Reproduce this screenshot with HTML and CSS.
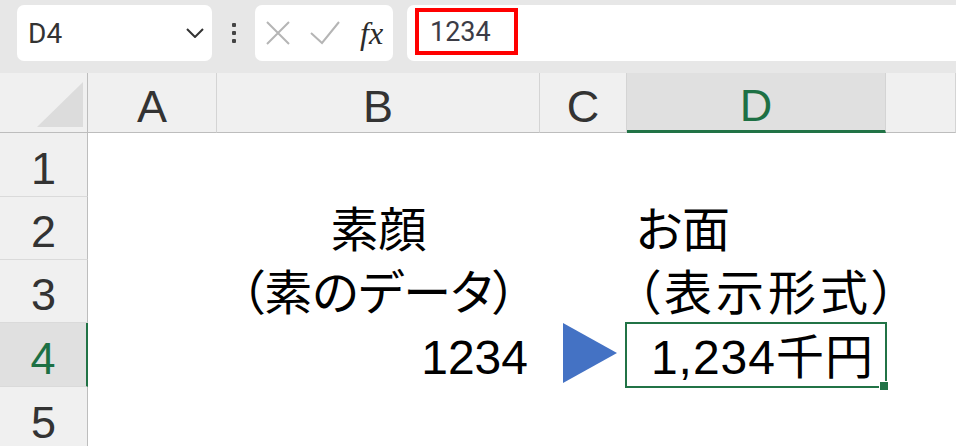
FILE: index.html
```html
<!DOCTYPE html>
<html lang="ja">
<head>
<meta charset="utf-8">
<title>Book1</title>
<link rel="stylesheet" href="styles.css">
</head>
<body>
<div class="app">
  <div class="formula-bar">
    <div class="name-box">
      <span class="name-text">D4</span>
      <svg class="chevron" viewBox="0 0 18 10" width="18" height="10"><polyline points="1,1 9,9 17,1" fill="none" stroke="#333" stroke-width="2"/></svg>
    </div>
    <div class="grip"><span></span><span></span><span></span></div>
    <div class="fx-buttons">
      <svg class="btn-cancel" viewBox="0 0 24 24" width="24" height="24"><path d="M1 1 L23 23 M23 1 L1 23" stroke="#b5b5b5" stroke-width="2" fill="none"/></svg>
      <svg class="btn-enter" viewBox="0 0 30 24" width="30" height="24"><polyline points="1,12 12,22 29,1" stroke="#b5b5b5" stroke-width="2" fill="none"/></svg>
      <span class="fx">fx</span>
    </div>
    <div class="formula-input">
      <div class="formula-value">1234</div>
    </div>
  </div>

  <div class="sheet">
    <div class="corner"></div>
    <div class="col-head">A</div>
    <div class="col-head">B</div>
    <div class="col-head">C</div>
    <div class="col-head active">D</div>
    <div class="col-head"></div>

    <div class="row-head">1</div>
    <div class="cell"></div>
    <div class="cell"></div>
    <div class="cell"></div>
    <div class="cell"></div>
    <div class="cell"></div>

    <div class="row-head">2</div>
    <div class="cell"></div>
    <div class="cell center">素顔</div>
    <div class="cell"></div>
    <div class="cell left">お面</div>
    <div class="cell"></div>

    <div class="row-head">3</div>
    <div class="cell"></div>
    <div class="cell center">（素のデータ）</div>
    <div class="cell"></div>
    <div class="cell left spaced">（表示形式）</div>
    <div class="cell"></div>

    <div class="row-head active">4</div>
    <div class="cell"></div>
    <div class="cell right">1234</div>
    <div class="cell arrow-cell">
      <svg viewBox="0 0 54 60" width="54" height="60"><polygon points="0,0 54,30 0,60" fill="#4472c4"/></svg>
    </div>
    <div class="cell right selected">1,234千円</div>
    <div class="cell"></div>

    <div class="row-head">5</div>
    <div class="cell"></div>
    <div class="cell"></div>
    <div class="cell"></div>
    <div class="cell"></div>
    <div class="cell"></div>
  </div>
</div>
</body>
</html>
```

FILE: styles.css
```css
* {
  box-sizing: border-box;
  margin: 0;
  padding: 0;
}

html,
body {
  width: 956px;
  height: 446px;
  overflow: hidden;
  background: #fff;
}

body {
  font-family: "Liberation Sans", "Noto Sans CJK JP", sans-serif;
}

/* ---------- formula bar ---------- */
.formula-bar {
  height: 73px;
  background: #e7e7e7;
  display: flex;
  align-items: flex-start;
  padding: 5px 0 0 17px;
}

.name-box {
  width: 195px;
  height: 56px;
  background: #fff;
  border-radius: 7px;
  display: flex;
  align-items: center;
  justify-content: space-between;
  padding: 0 8px 0 11px;
}

.name-text {
  font-family: Roboto, sans-serif;
  font-size: 28px;
  color: #333;
}

.grip {
  width: 43px;
  height: 56px;
  display: flex;
  flex-direction: column;
  align-items: center;
  justify-content: center;
  gap: 4px;
}

.grip span {
  width: 4px;
  height: 4px;
  background: #444;
  border-radius: 1px;
}

.fx-buttons {
  width: 138px;
  height: 56px;
  background: #fff;
  border-radius: 7px;
  display: flex;
  align-items: center;
  padding-left: 11px;
}

.btn-enter {
  margin-left: 20px;
}

.fx {
  margin-left: 20px;
  font-family: "Liberation Serif", serif;
  font-style: italic;
  font-size: 32px;
  color: #2b2b2b;
}

.formula-input {
  flex: 1;
  margin-left: 14px;
  margin-right: -10px;
  height: 56px;
  background: #fff;
  border-radius: 7px;
  padding: 3px 0 0 8px;
}

.formula-value {
  width: 103px;
  height: 47px;
  border: 4px solid #ff0000;
  display: flex;
  align-items: center;
  padding-left: 11px;
  font-family: Roboto, sans-serif;
  font-size: 27px;
  color: #3c3c46;
}

/* ---------- sheet grid ---------- */
.sheet {
  display: grid;
  grid-template-columns: 88px 129px 323px 87px 259px 1fr;
  grid-template-rows: 60px 64px 63px 63px 64px 64px;
  background: #fff;
}

.corner {
  background: #f0f0f0;
  border-right: 1px solid #bdbdbd;
  border-bottom: 1px solid #bdbdbd;
  display: flex;
  align-items: flex-end;
  justify-content: flex-end;
  padding: 0 4px 5px 0;
}

.corner::after {
  content: "";
  width: 46px;
  height: 45px;
  background: #dcdcdc;
  clip-path: polygon(100% 0, 100% 100%, 0 100%);
}

.col-head {
  background: #f0f0f0;
  border-right: 1px solid #d4d4d4;
  border-bottom: 1px solid #bdbdbd;
  display: flex;
  align-items: center;
  justify-content: center;
  padding-top: 8px;
  font-size: 45px;
  line-height: 45px;
  color: #333;
}

.col-head.active {
  background: #e0e0e0;
  color: #1d7044;
  border-bottom: 3px solid #217346;
}

.row-head {
  background: #f0f0f0;
  border-right: 1px solid #bdbdbd;
  border-bottom: 1px solid #dadada;
  display: flex;
  align-items: center;
  justify-content: center;
  padding-top: 7px;
  font-size: 45px;
  line-height: 45px;
  color: #333;
}

.row-head.active {
  background: #e0e0e0;
  color: #1d7044;
  border-right: 2px solid #217346;
}

.cell {
  display: flex;
  align-items: flex-end;
  padding-bottom: 5px;
  font-size: 48px;
  line-height: 48px;
  color: #000;
  font-feature-settings: "palt";
  white-space: nowrap;
}

.cell.center {
  justify-content: center;
}

.cell.right {
  justify-content: flex-end;
  padding-right: 12px;
}

.cell.left {
  padding-left: 9px;
}

.cell.spaced {
  letter-spacing: 4px;
}

.arrow-cell {
  align-items: flex-start;
  padding: 0 0 0 23px;
}

/* active cell frame with its fill handle */
.cell.selected {
  position: relative;
  letter-spacing: 1px;
}

.cell.selected::after {
  content: "";
  position: absolute;
  left: -2px;
  top: -1px;
  right: -1px;
  bottom: -1px;
  border: 2px solid #217346;
}

.cell.selected::before {
  content: "";
  position: absolute;
  right: -3px;
  bottom: -4px;
  width: 8px;
  height: 8px;
  background: #217346;
  border: 1px solid #fff;
  z-index: 1;
}
```
